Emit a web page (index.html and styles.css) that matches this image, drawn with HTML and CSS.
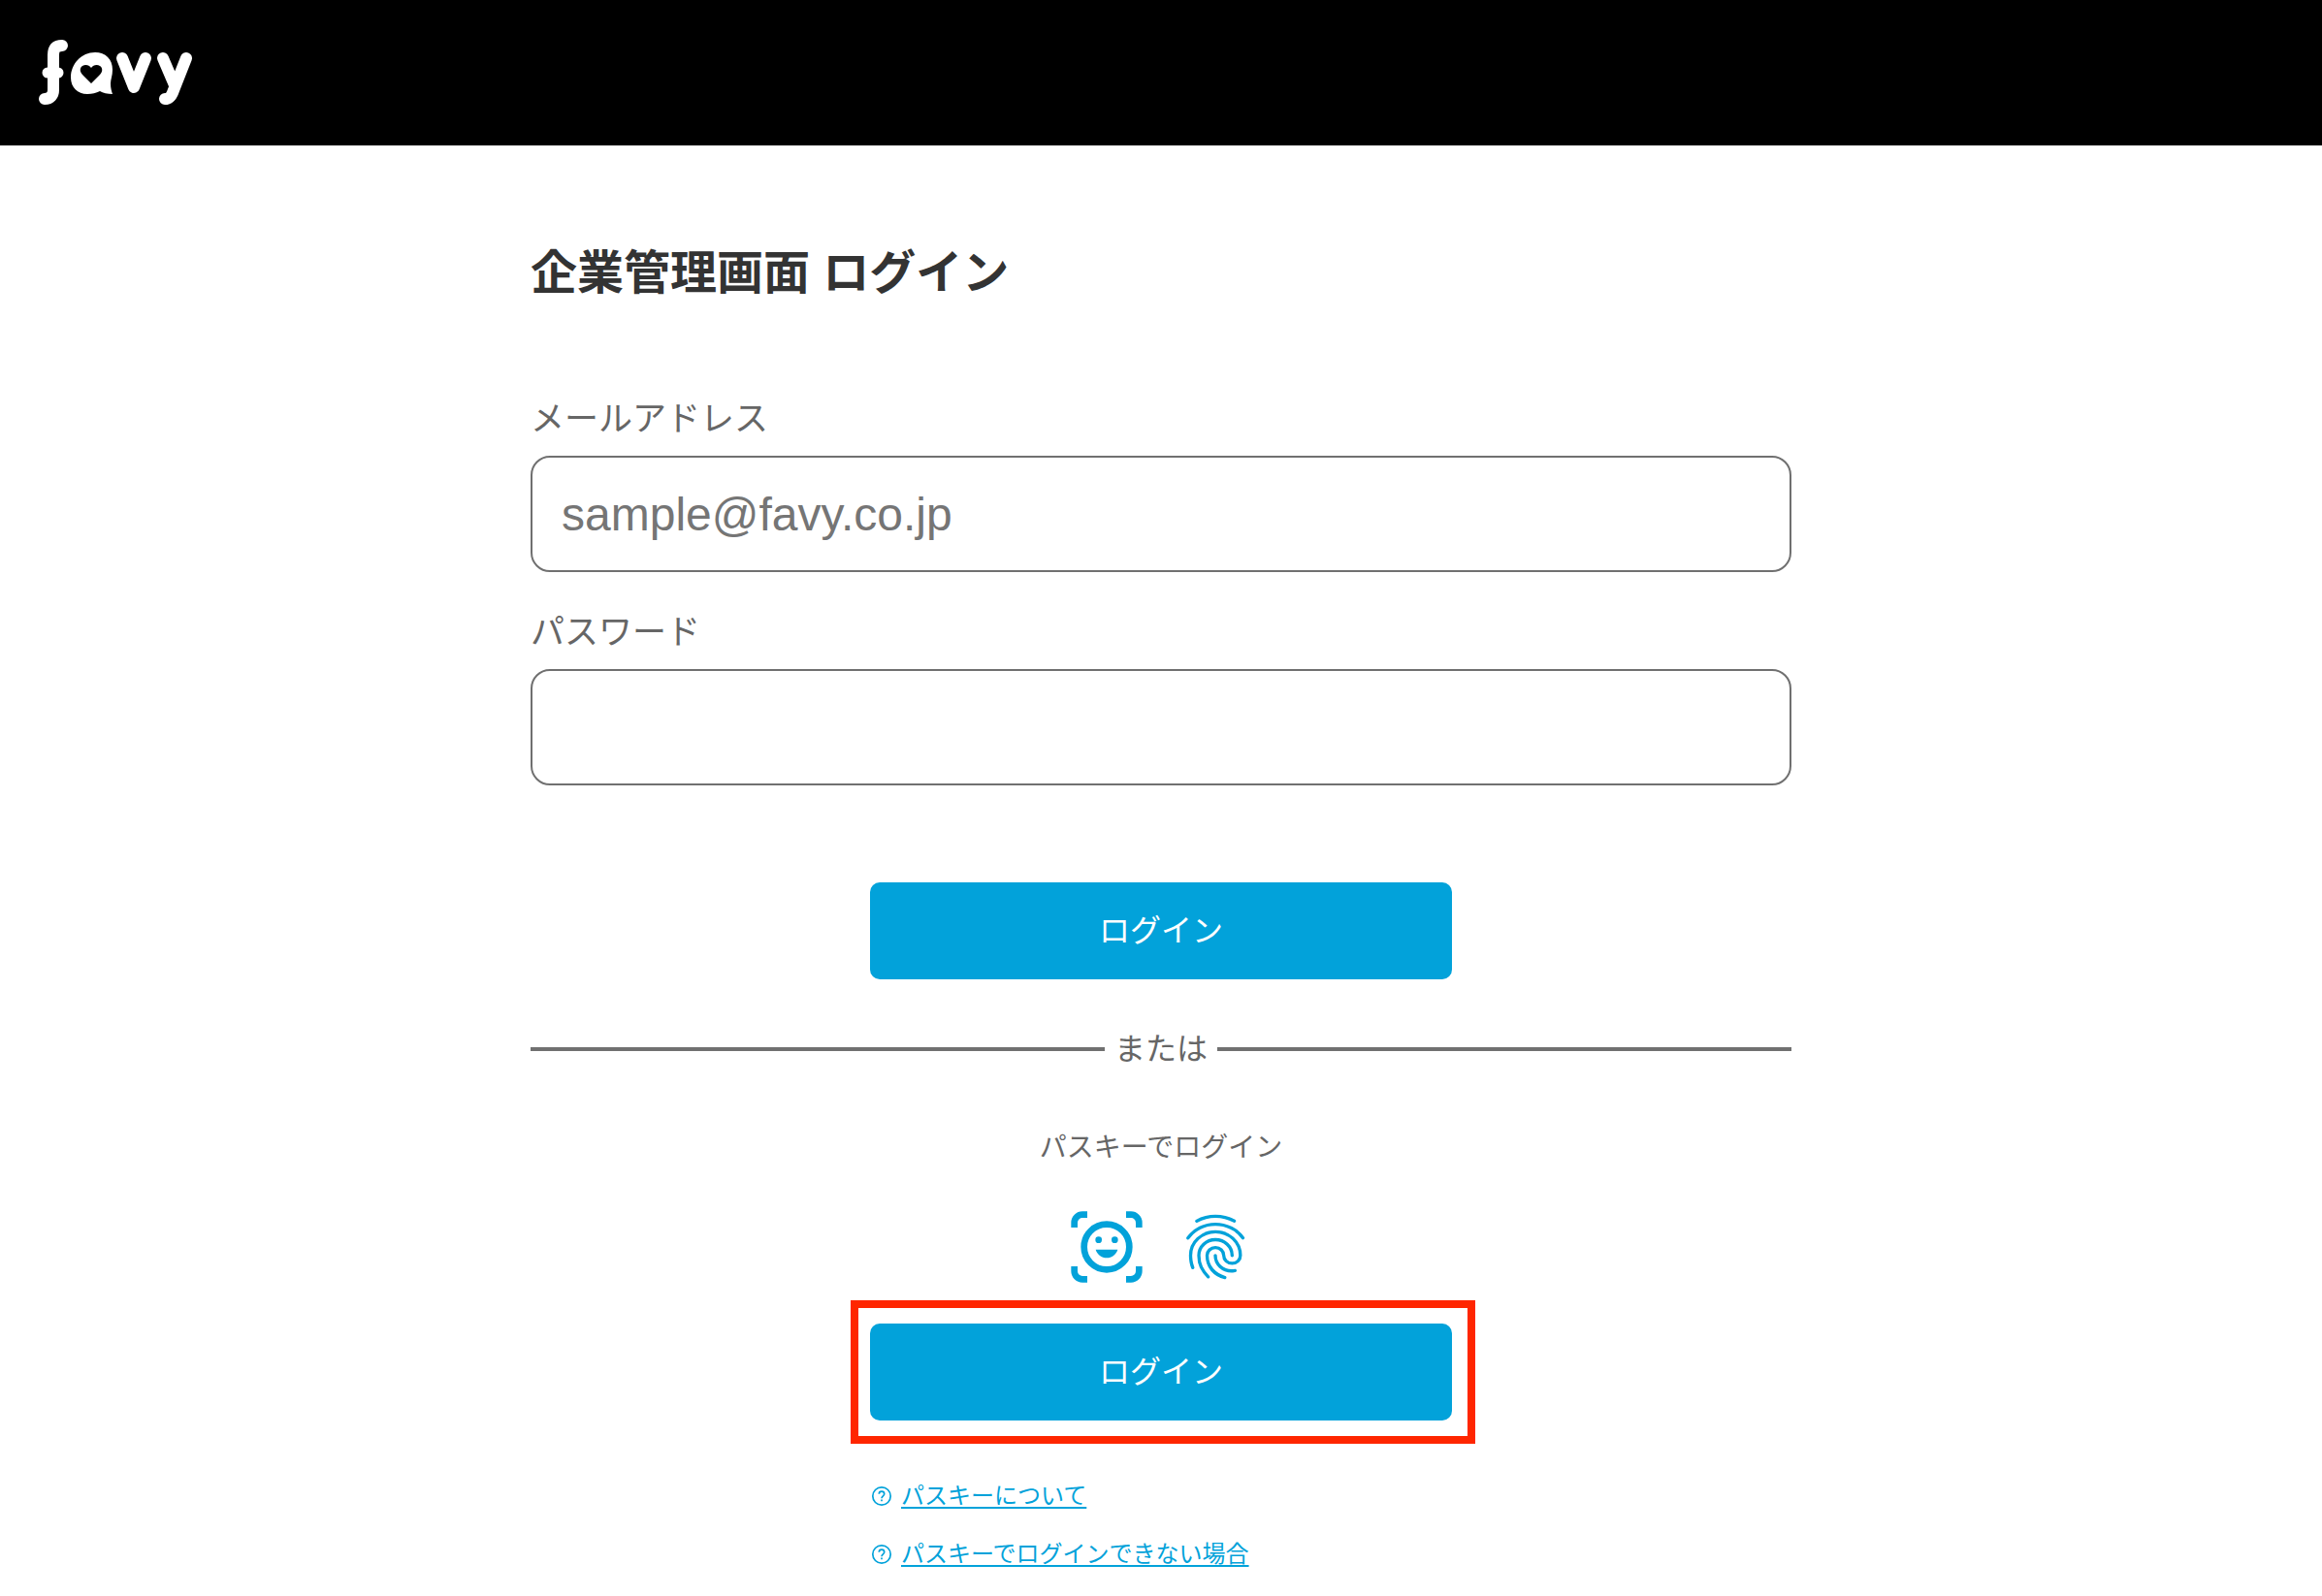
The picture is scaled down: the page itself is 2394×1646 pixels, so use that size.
FILE: index.html
```
<!DOCTYPE html>
<html lang="ja">
<head>
	<meta charset="UTF-8">
	<title>企業管理画面 ログイン</title>
	<link rel="stylesheet" href="styles.css">
</head>
<body>
	<header class="header">
		<a href="#" class="logo" aria-label="favy">
			<svg viewBox="0 0 160 72" width="160" height="72">
				<g fill="none" stroke="#fff" stroke-width="12" stroke-linecap="round" stroke-linejoin="round">
					<path d="M24 8C17 8 15 12 15 18V54C15 59 12 63 6 63"/>
					<path d="M9 36H20" stroke-width="11"/>
					<path d="M86 21L98 51L110 21"/>
					<path d="M128 21L140 49M152 21L139 54C137 60 135 63 130 63"/>
				</g>
				<path fill="#fff" d="M58 15C69 15 76 22 76 33C76 39 74 43 74 47C74 52 75 55 76 58C71 58 66 57 63 55C59 57 55 58 50 58C40 58 33 51 33 41C33 27 44 15 58 15Z"/>
				<path d="M54 47L45 38C42 35 42 31 45 29C48 27 52 28 54 31C56 28 60 27 63 29C66 31 66 35 63 38Z"/>
			</svg>
		</a>
	</header>

	<main class="container">
		<h1 class="title">企業管理画面 ログイン</h1>

		<form action="#">
			<div class="field">
				<label for="email">メールアドレス</label>
				<input type="email" id="email" placeholder="sample@favy.co.jp">
			</div>
			<div class="field">
				<label for="password">パスワード</label>
				<input type="password" id="password">
			</div>
			<button type="submit" class="btn">ログイン</button>
		</form>

		<div class="divider">または</div>

		<section class="passkey">
			<p class="passkey-title">パスキーでログイン</p>
			<div class="passkey-icons">
				<svg viewBox="0 0 24 24" width="80" height="80">
					<g fill="none" stroke="#02a2da" stroke-width="2">
						<path d="M2 6V4.500A2.500 2.500 0 0 1 4.500 2H6M18 2H19.500A2.500 2.500 0 0 1 22 4.500V6M22 18V19.500A2.500 2.500 0 0 1 19.500 22H18M6 22H4.500A2.500 2.500 0 0 1 2 19.500V18"/>
						<circle cx="12" cy="12" r="7"/>
					</g>
					<g fill="#02a2da">
						<circle cx="9.500" cy="9.800" r="1"/>
						<circle cx="14.500" cy="9.800" r="1"/>
						<path d="M8.600 12.800H15.400C14.900 14.400 13.600 15.400 12 15.400S9.100 14.400 8.600 12.800Z"/>
					</g>
				</svg>
				<svg viewBox="0 -960 960 960" width="80" height="80" fill="#02a2da">
					<path d="M481-781q106 0 200 45.500T838-604q7 9 4.500 16t-8.500 12q-6 5-14 4.500t-14-8.500q-55-78-141.500-119.500T481-741q-97 0-182 41.500T158-580q-6 9-14 10t-14-4q-7-5-8.500-12.500T126-602q62-85 155.500-132T481-781Zm0 94q135 0 232 90t97 223q0 50-35.500 83.500T688-257q-51 0-87.500-33.500T564-374q0-33-24.500-55.500T481-452q-34 0-58.500 22.500T398-374q0 97 57.500 162T604-121q9 3 12 10t1 15q-2 7-8 12t-15 3q-104-26-170-103.500T358-374q0-50 36-84t87-34q51 0 87 34t36 84q0 33 25 55.500t59 22.500q34 0 58-22.500t24-55.500q0-116-85-195t-203-79q-118 0-203 79t-85 194q0 24 4.500 60t21.500 84q3 9-.500 16T208-205q-8 3-15.500-.500T182-217q-15-39-21.500-77.500T154-374q0-133 96.500-223T481-687Zm0-192q64 0 125 15.500T724-819q9 5 10.500 12t-1.500 14q-3 7-10 11t-17-1q-53-27-109.500-41.500T481-839q-58 0-114 13.500T260-783q-8 5-16 2.500T232-791q-4-8-2-14.500t10-11.500q56-30 117-46t124-16Zm0 289q93 0 160 62.500T708-374q0 9-5.500 14.500T688-354q-8 0-14-5.500t-6-14.500q0-75-55.500-125.500T481-550q-76 0-130.500 50.500T296-374q0 81 28 137.500T406-123q6 6 6 14t-6 14q-6 6-14 6t-14-6q-59-62-90.500-126.500T256-374q0-91 66-153.500T481-590Zm-1 196q9 0 14.500 6t5.500 14q0 75 54 123t126 48q6 0 17-1t23-3q9-2 15.500 2.500T744-191q2 8-3 14t-13 8q-18 5-31.500 5.500t-16.500.500q-89 0-154.500-60T460-374q0-8 5.500-14t14.500-6Z"/>
				</svg>
			</div>
			<div class="highlight">
				<button type="button" class="btn">ログイン</button>
			</div>
			<ul class="help">
				<li>
					<svg viewBox="0 0 24 24" width="24" height="24" fill="none" stroke="#02a2da" stroke-width="1.700"><circle cx="12" cy="12" r="9.200"/><path d="M9.300 9.800C9.300 6.300 14.700 6.300 14.700 9.800C14.700 11.800 12 12 12 14.300M12 15.600V17.300"/></svg>
					<a href="#">パスキーについて</a>
				</li>
				<li>
					<svg viewBox="0 0 24 24" width="24" height="24" fill="none" stroke="#02a2da" stroke-width="1.700"><circle cx="12" cy="12" r="9.200"/><path d="M9.300 9.800C9.300 6.300 14.700 6.300 14.700 9.800C14.700 11.800 12 12 12 14.300M12 15.600V17.300"/></svg>
					<a href="#">パスキーでログインできない場合</a>
				</li>
			</ul>
		</section>
	</main>
</body>
</html>
```
FILE: styles.css
```
*{
	box-sizing: border-box;
}
body,h1,p,ul{
	margin: 0;
	padding: 0;
}
body{
	color: #666;
	background: #fff;
	font-family: "Liberation Sans", "Noto Sans CJK JP", sans-serif;
}
svg{
	display: block;
}
.header{
	display: flex;
	align-items: center;
	height: 150px;
	padding: 0 40px;
	background: #000;
}
.container{
	max-width: 1300px;
	margin: 0 auto;
	padding: 102px 0 20px;
}
.title{
	margin-bottom: 90px;
	color: #333;
	font-size: 48px;
	line-height: 60px;
}
.field{
	margin-bottom: 32px;
}
.field label{
	display: block;
	margin-bottom: 8px;
	font-size: 35px;
	line-height: 60px;
}
.field input{
	display: block;
	width: 100%;
	height: 120px;
	padding: 0 30px;
	border: 2px solid #707070;
	border-radius: 20px;
	background: #fff;
	color: #333;
	font-family: inherit;
	font-size: 48px;
}
.field input::placeholder{
	color: #757575;
}
.btn{
	display: block;
	width: 100%;
	max-width: 600px;
	height: 100px;
	margin: 0 auto;
	padding: 0 0 6px;
	border: 0;
	border-radius: 10px;
	background: #02a2da;
	color: #fff;
	font-family: inherit;
	font-size: 32px;
	cursor: pointer;
}
form .btn{
	margin-top: 100px;
}
.divider{
	display: flex;
	align-items: center;
	gap: 10px;
	margin-top: 48px;
	font-size: 32px;
	line-height: 48px;
}
.divider::before,
.divider::after{
	content: "";
	flex: 1;
	height: 4px;
	background: #707070;
}
.passkey{
	max-width: 600px;
	margin: 58px auto 0;
}
.passkey-title{
	font-size: 28px;
	line-height: 40px;
	text-align: center;
}
.passkey-icons{
	display: flex;
	justify-content: center;
	gap: 32px;
	margin-top: 42px;
}
.highlight{
	position: relative;
	margin-top: 39px;
}
/* red frame round the passkey button */
.highlight::after{
	content: "";
	position: absolute;
	inset: -24px -24px -24px -20px;
	border: 8px solid #ff2600;
	pointer-events: none;
}
.help{
	margin-top: 58px;
	list-style: none;
}
.help li{
	display: flex;
	align-items: center;
	gap: 8px;
	margin-bottom: 20px;
	font-size: 24px;
	line-height: 40px;
}
.help a{
	color: #02a2da;
	text-decoration: underline;
	text-decoration-thickness: 2px;
	text-underline-offset: 3px;
}
```
